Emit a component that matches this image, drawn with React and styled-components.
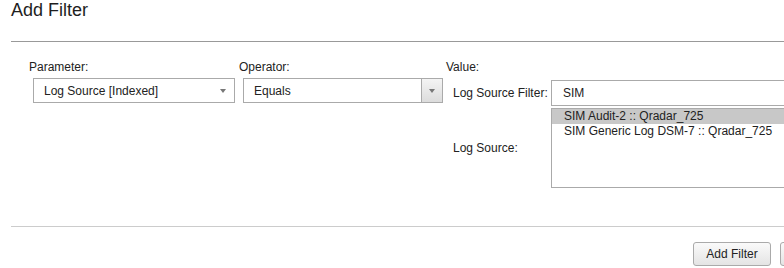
import React from 'react'
import styled, { createGlobalStyle } from 'styled-components';

const GlobalStyle = createGlobalStyle`
  html, body {
    margin: 0;
    padding: 0;
    background: #fff;
    overflow: hidden;
  }
  body {
    font-family: "Liberation Sans", Arial, sans-serif;
    font-size: 12px;
    color: #222;
  }
`;

const Page = styled.div`
  width: 852px;
  padding-left: 11px;
  box-sizing: border-box;
`;

const Header = styled.div`
  height: 41px;
  border-bottom: 1px solid #999;
`;

const Title = styled.h1`
  margin: 0;
  font-size: 18px;
  font-weight: normal;
  line-height: 21px;
  color: #1e1e1e;
`;

const FormRow = styled.div`
  display: flex;
  padding: 18px 0 0 18px;
`;

const Column = styled.div`
  width: ${p => p.width ? `${p.width}px` : 'auto'};
  flex: ${p => p.width ? '0 0 auto' : '1'};
`;

const Label = styled.div`
  line-height: 14px;
  margin-bottom: 4px;
`;

const Select = styled.div`
  position: relative;
  margin-left: 4px;
  width: ${p => p.width}px;
  height: 25px;
  box-sizing: border-box;
  border: 1px solid #aaa;
  background: #fff;
  display: flex;
  align-items: center;
  padding-left: 10px;
`;

const SelectText = styled.span`
  flex: 1;
  line-height: 14px;
`;

const Caret = styled.span`
  width: 0;
  height: 0;
  border-left: 3px solid transparent;
  border-right: 3px solid transparent;
  border-top: 4px solid #777;
  margin-right: 8px;
`;

const CaretButton = styled.div`
  width: 20px;
  align-self: stretch;
  border-left: 1px solid #aaa;
  background: linear-gradient(#f4f4f4, #dcdcdc);
  display: flex;
  align-items: center;
  justify-content: center;

  ${Caret} {
    margin-right: 0;
  }
`;

const ValueGrid = styled.div`
  display: grid;
  grid-template-columns: 98px 1fr;
  row-gap: 2px;
  margin: 6px 0 0 7px;
  align-items: center;
`;

const TextInput = styled.div`
  height: 26px;
  box-sizing: border-box;
  border: 1px solid #aaa;
  padding-left: 11px;
  display: flex;
  align-items: center;
`;

const ListBox = styled.div`
  height: 80px;
  box-sizing: border-box;
  border: 1px solid #aaa;
`;

const Option = styled.div`
  line-height: 15px;
  padding-left: 12px;
  background: ${p => p.selected ? '#c8c8c8' : 'transparent'};
`;

const Footer = styled.div`
  margin-top: 38px;
  border-top: 1px solid #ccc;
  display: flex;
  justify-content: flex-end;
  gap: 9px;
  padding: 15px 10px 0 0;
`;

const Button = styled.button`
  height: 24px;
  width: ${p => p.width}px;
  border: 1px solid #aaa;
  border-radius: 3px;
  background: linear-gradient(#fafafa, #e4e4e4);
  font-family: "Liberation Sans", Arial, sans-serif;
  font-size: 12px;
  color: #222;
  padding: 0;
`;

const sources = ['SIM Audit-2 :: Qradar_725', 'SIM Generic Log DSM-7 :: Qradar_725'];

const App = () => (
  <Page>
    <GlobalStyle />
    <Header>
      <Title>Add Filter</Title>
    </Header>
    <FormRow>
      <Column width={210}>
        <Label>Parameter:</Label>
        <Select width={202}>
          <SelectText>Log Source [Indexed]</SelectText>
          <Caret />
        </Select>
      </Column>
      <Column width={207}>
        <Label>Operator:</Label>
        <Select width={200}>
          <SelectText>Equals</SelectText>
          <CaretButton><Caret /></CaretButton>
        </Select>
      </Column>
      <Column>
        <Label>Value:</Label>
        <ValueGrid>
          <span>Log Source Filter:</span>
          <TextInput>SIM</TextInput>
          <span>Log Source:</span>
          <ListBox>
            {sources.map((s, i) => (
              <Option key={s} selected={i === 0}>{s}</Option>
            ))}
          </ListBox>
        </ValueGrid>
      </Column>
    </FormRow>
    <Footer>
      <Button width={78}>Add Filter</Button>
      <Button width={62}>Cancel</Button>
    </Footer>
  </Page>
)

export default App
